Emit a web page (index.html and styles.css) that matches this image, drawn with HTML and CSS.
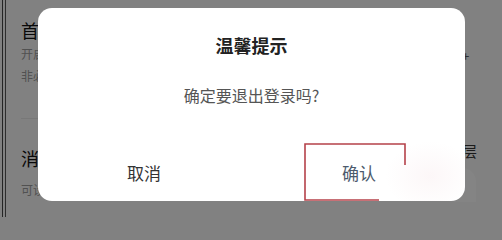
FILE: index.html
```html
<!DOCTYPE html>
<html lang="zh">
<head>
<meta charset="utf-8">
<link rel="stylesheet" href="styles.css">
</head>
<body>
<div class="page">
  <div class="edge"></div>
  <div class="list">
    <div class="item">
      <div class="item-title">首页设置</div>
      <div class="item-sub">开启后显示推荐内容</div>
      <div class="item-sub">非必要不建议关闭</div>
    </div>
    <div class="item second">
      <div class="item-title">消息通知</div>
      <div class="item-sub">可设置通知方式</div>
    </div>
  </div>
  <div class="side">
    <span class="side-plus">+</span>
    <span class="side-ceng">层</span>
    <span class="side-block"></span>
  </div>
</div>
<div class="mask"></div>
<div class="dialog">
  <div class="dlg-title">温馨提示</div>
  <div class="dlg-msg">确定要退出登录吗?</div>
  <div class="dlg-actions">
    <div class="btn cancel">取消</div>
    <div class="btn ok">确认</div>
  </div>
  <div class="glow"></div>
</div>
<svg class="mark" width="110" height="62" viewBox="0 0 110 62">
  <path d="M101 22 L101 1 L1 1 L1 57 L75 57" fill="none" stroke="#b5414a" stroke-width="1.6"/>
</svg>
</body>
</html>
```
FILE: styles.css
```css
html {
  margin: 0;
  padding: 0;
  background: #818181;
}
body {
  margin: 0;
  padding: 0;
  width: 502px;
  height: 217px;
  overflow: hidden;
  position: relative;
  background: #f4f4f4;
  font-family: "Noto Sans CJK SC", "Noto Sans", sans-serif;
}
.page {
  display: flex;
  height: 217px;
}
.edge {
  width: 2px;
  margin-left: 2px;
  border-left: 1px solid #444;
  border-right: 1px solid #555;
}
.list {
  flex: 1;
  padding-left: 15px;
  padding-top: 17px;
}
.item {
  height: 101px;
  border-bottom: 1px solid #e2e2e2;
  white-space: nowrap;
  overflow: hidden;
}
.item.second {
  border-bottom: none;
  padding-top: 26px;
  height: auto;
}
.item-title {
  font-size: 18px;
  line-height: 26px;
  color: #111;
}
.item-sub {
  font-size: 12px;
  line-height: 22px;
  color: #999;
}
.item-sub:first-of-type {
  margin-top: 7px;
}
.item.second .item-sub {
  margin-top: 8px;
}
.side {
  width: 40px;
  display: flex;
  flex-direction: column;
  align-items: flex-start;
  padding-left: 10px;
  padding-top: 48px;
  color: #555;
}
.side-plus {
  font-size: 13px;
  line-height: 16px;
}
.side-ceng {
  margin-top: 78px;
  font-size: 15px;
  line-height: 18px;
  color: #333;
}
.side-block {
  margin-top: 8px;
  margin-left: -8px;
  width: 22px;
  height: 34px;
  background: #fff;
  opacity: 0.55;
  border-radius: 0 14px 0 0;
}
.mask {
  position: absolute;
  inset: 0;
  background: rgba(0, 0, 0, 0.47);
}
.dialog {
  position: absolute;
  left: 38px;
  top: 8px;
  width: 427px;
  height: 193px;
  background: #fff;
  border-radius: 14px;
  display: flex;
  flex-direction: column;
  align-items: center;
  overflow: hidden;
}
.dlg-title {
  margin-top: 24px;
  font-size: 18px;
  line-height: 26px;
  font-weight: bold;
  color: #222;
}
.dlg-msg {
  margin-top: 25px;
  font-size: 16px;
  line-height: 24px;
  color: #555;
}
.dlg-actions {
  margin-top: auto;
  align-self: stretch;
  display: flex;
  height: 57px;
}
.btn {
  flex: 1;
  display: flex;
  align-items: center;
  justify-content: center;
  font-size: 17px;
  padding-bottom: 1px;
}
.cancel {
  color: #333;
  padding-right: 3px;
}
.ok {
  color: #4c5a6c;
}
.glow {
  position: absolute;
  right: -10px;
  bottom: -10px;
  width: 90px;
  height: 70px;
  background: radial-gradient(ellipse at center, rgba(240, 210, 215, 0.18), rgba(255, 255, 255, 0) 70%);
}
.mark {
  position: absolute;
  left: 304px;
  top: 143px;
}
```
